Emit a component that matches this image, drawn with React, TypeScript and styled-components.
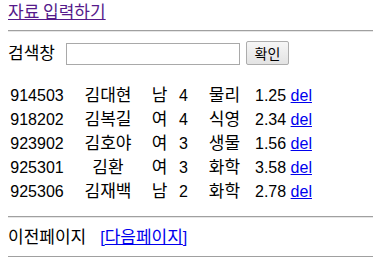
import React from "react";
import styled, { createGlobalStyle } from "styled-components";

const Global = createGlobalStyle`
  html, body { margin: 0; padding: 0; background: #fff; overflow: hidden; }
  body {
    font-family: "Liberation Sans", "Noto Sans CJK KR", sans-serif;
    font-size: 16px;
    color: #000;
  }
`;

const Page = styled.div`
  width: 373px;
  height: 257px;
  padding-left: 8px;
  box-sizing: border-box;
  display: flex;
  flex-direction: column;
  align-items: flex-start;
`;

const Ko = styled.span`
  font-family: "Noto Sans CJK KR", sans-serif;
  font-size: 17px;
  line-height: 1;
`;

const TopLine = styled.div`
  height: 22px;
  line-height: 22px;
  margin-top: 2px;
`;

const Link = styled.a<{ $visited?: boolean }>`
  color: ${(p) => (p.$visited ? "#551A8B" : "#0000EE")};
  text-decoration: underline;
  cursor: pointer;
`;

const Rule = styled.hr<{ $top: number }>`
  align-self: stretch;
  margin: ${(p) => p.$top}px -8px 0 0;
  height: 0;
  border: none;
  border-top: 1px solid #a0a0a0;
  border-bottom: 1px solid #e6e6e6;
`;

const SearchRow = styled.form`
  display: flex;
  align-items: flex-start;
  margin-top: 9px;
  height: 24px;
`;

const Label = styled.span`
  width: 58px;
  line-height: 24px;
  margin-top: 1px;
`;

const Input = styled.input`
  width: 174px;
  height: 22px;
  box-sizing: border-box;
  border: 1px solid #a9a9a9;
  padding: 0 2px;
  margin: 2px 0 0 0;
  font-size: 14px;
  background: #fff;
`;

const Button = styled.button`
  margin-left: 6px;
  width: 43px;
  height: 24px;
  box-sizing: border-box;
  border: 1px solid #adadad;
  border-radius: 2px;
  background: linear-gradient(#f6f6f6, #e3e3e3);
  font-family: "Noto Sans CJK KR", sans-serif;
  font-size: 14px;
  padding: 0;
  line-height: 22px;
  color: #000;
`;

const Table = styled.table`
  margin-top: 19px;
  border-collapse: collapse;
  table-layout: fixed;
`;

const Cell = styled.td<{ $w: number; $align?: string }>`
  width: ${(p) => p.$w}px;
  height: 24px;
  padding: 0;
  text-align: ${(p) => p.$align || "center"};
  white-space: nowrap;
  line-height: 24px;
`;

const GpaCell = styled(Cell)`
  padding-left: 4px;
`;

const Pager = styled.div`
  margin-top: 9px;
  height: 21px;
  line-height: 21px;
  display: flex;
`;

const Bracket = styled.span`
  color: #0000EE;
`;

const NextWrap = styled.span`
  margin-left: 14px;
`;

const rows = [
  ["914503", "김대현", "남", "4", "물리", "1.25"],
  ["918202", "김복길", "여", "4", "식영", "2.34"],
  ["923902", "김호야", "여", "3", "생물", "1.56"],
  ["925301", "김환", "여", "3", "화학", "3.58"],
  ["925306", "김재백", "남", "2", "화학", "2.78"],
];

export default function App() {
  return (
    <>
      <Global />
      <Page>
        <TopLine>
          <Link $visited>
            <Ko>자료 입력하기</Ko>
          </Link>
        </TopLine>
        <Rule $top={6} />
        <SearchRow onSubmit={(e) => e.preventDefault()}>
          <Label>
            <Ko>검색창</Ko>
          </Label>
          <Input type="text" />
          <Button type="button">확인</Button>
        </SearchRow>
        <Table>
          <tbody>
            {rows.map((r) => (
              <tr key={r[0]}>
                <Cell $w={58}>{r[0]}</Cell>
                <Cell $w={84}>
                  <Ko>{r[1]}</Ko>
                </Cell>
                <Cell $w={19}>
                  <Ko>{r[2]}</Ko>
                </Cell>
                <Cell $w={29}>{r[3]}</Cell>
                <Cell $w={53}>
                  <Ko>{r[4]}</Ko>
                </Cell>
                <GpaCell $w={70} $align="left">
                  {r[5]} <Link>del</Link>
                </GpaCell>
              </tr>
            ))}
          </tbody>
        </Table>
        <Rule $top={12} />
        <Pager>
          <Ko>이전페이지</Ko>
          <NextWrap>
            <Bracket>[</Bracket>
            <Link>
              <Ko>다음페이지</Ko>
            </Link>
            <Bracket>]</Bracket>
          </NextWrap>
        </Pager>
        <Rule $top={8} />
      </Page>
    </>
  );
}
